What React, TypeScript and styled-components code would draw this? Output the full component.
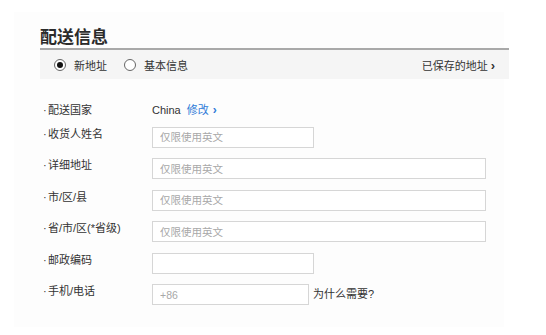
import React, { useState } from 'react'
import styled, { createGlobalStyle } from 'styled-components'

const GlobalStyle = createGlobalStyle`
  html, body {
    margin: 0;
    padding: 0;
    background: #ffffff;
  }
  body {
    font-family: "Liberation Sans", Arial, "Noto Sans CJK SC", sans-serif;
    color: #333;
  }
`

interface FieldDef {
  label: string
  placeholder: string
  size: 'short' | 'long' | 'phone'
  hint?: string
}

const fields: FieldDef[] = [
  { label: '收货人姓名', placeholder: '仅限使用英文', size: 'short' },
  { label: '详细地址', placeholder: '仅限使用英文', size: 'long' },
  { label: '市/区/县', placeholder: '仅限使用英文', size: 'long' },
  { label: '省/市/区(*省级)', placeholder: '仅限使用英文', size: 'long' },
  { label: '邮政编码', placeholder: '', size: 'short' },
  { label: '手机/电话', placeholder: '+86', size: 'phone', hint: '为什么需要?' },
]

const App: React.FC = () => {
  const [mode, setMode] = useState<'new' | 'basic'>('new')

  return (
    <>
      <GlobalStyle />
      <Panel>
        <Title>配送信息</Title>
        <TabBar>
          <RadioGroup>
            <RadioOption onClick={() => setMode('new')}>
              <RadioDot checked={mode === 'new'} />
              新地址
            </RadioOption>
            <RadioOption onClick={() => setMode('basic')}>
              <RadioDot checked={mode === 'basic'} />
              基本信息
            </RadioOption>
          </RadioGroup>
          <SavedLink>
            已保存的地址<Chevron>›</Chevron>
          </SavedLink>
        </TabBar>

        <Form>
          <Row>
            <Label>配送国家</Label>
            <CountryValue>
              China
              <EditLink>
                修改<SmallChevron>›</SmallChevron>
              </EditLink>
            </CountryValue>
          </Row>
          {fields.map(field => (
            <Row key={field.label}>
              <Label>{field.label}</Label>
              <Input size={field.size} placeholder={field.placeholder} />
              {field.hint && <Hint>{field.hint}</Hint>}
            </Row>
          ))}
        </Form>
      </Panel>
    </>
  )
}

export default App

// ========================================
// STYLED COMPONENTS
// ========================================

const Panel = styled.div`
  margin: 12px 0 0 14px;
  width: 464px;
  padding: 11px 0 22px 26px;
  background: #fdfdfd;
`

const Title = styled.h2`
  margin: 0;
  width: 469px;
  height: 25px;
  box-sizing: content-box;
  font-size: 17px;
  line-height: 26px;
  font-weight: 700;
  color: #2b2b2b;
  border-bottom: 2px solid #a9a9a9;
  font-family: "Noto Sans CJK SC", sans-serif;
`

const TabBar = styled.div`
  width: 469px;
  height: 29px;
  box-sizing: border-box;
  padding: 0 14px 0 14px;
  background: #f5f5f5;
  display: flex;
  align-items: center;
  justify-content: space-between;
  font-size: 11px;
  color: #333;
`

const RadioGroup = styled.div`
  display: flex;
  align-items: center;
  gap: 17px;
`

const RadioOption = styled.label`
  display: flex;
  align-items: center;
  gap: 8px;
  cursor: pointer;
`

const RadioDot = styled.span<{ checked: boolean }>`
  position: relative;
  width: 10px;
  height: 10px;
  border-radius: 50%;
  border: 1px solid #666;
  background: #fff;

  &::after {
    content: '';
    position: absolute;
    top: 2px;
    left: 2px;
    width: 6px;
    height: 6px;
    border-radius: 50%;
    background: #111;
    display: ${props => (props.checked ? 'block' : 'none')};
  }
`

const SavedLink = styled.a`
  color: #333;
  cursor: pointer;
  display: flex;
  align-items: center;
`

const Chevron = styled.span`
  margin-left: 3px;
  font-size: 13px;
  font-weight: 700;
  line-height: 12px;
  position: relative;
  top: 1px;
`

const Form = styled.div`
  margin-top: 24px;
  display: flex;
  flex-direction: column;
  gap: 10.5px;
`

const Row = styled.div`
  display: flex;
  align-items: flex-start;
`

const Label = styled.div`
  width: 112px;
  flex-shrink: 0;
  font-size: 11px;
  line-height: 12px;
  padding-top: 1px;
  color: #333;

  &::before {
    content: '·';
    display: inline-block;
    width: 5px;
    margin-left: 3px;
  }
`

const CountryValue = styled.div`
  font-size: 11px;
  line-height: 12px;
  padding-top: 1px;
  color: #333;
  display: flex;
  align-items: center;
`

const EditLink = styled.a`
  margin-left: 6px;
  color: #2f7bd8;
  cursor: pointer;
  display: flex;
  align-items: center;
`

const SmallChevron = styled.span`
  margin-left: 4px;
  font-size: 12px;
  font-weight: 700;
`

const inputWidths = {
  short: '162px',
  long: '334px',
  phone: '157px',
}

const Input = styled.input<{ size: 'short' | 'long' | 'phone' }>`
  width: ${props => inputWidths[props.size]};
  height: 21px;
  box-sizing: border-box;
  border: 1px solid #d6d6d6;
  background: #fff;
  padding: 0 7px;
  font-size: 10.5px;
  font-family: inherit;
  color: #333;
  outline: none;

  &::placeholder {
    color: #a8a8a8;
  }
`

const Hint = styled.span`
  margin-left: 4px;
  font-size: 11px;
  line-height: 21px;
  color: #333;
`
